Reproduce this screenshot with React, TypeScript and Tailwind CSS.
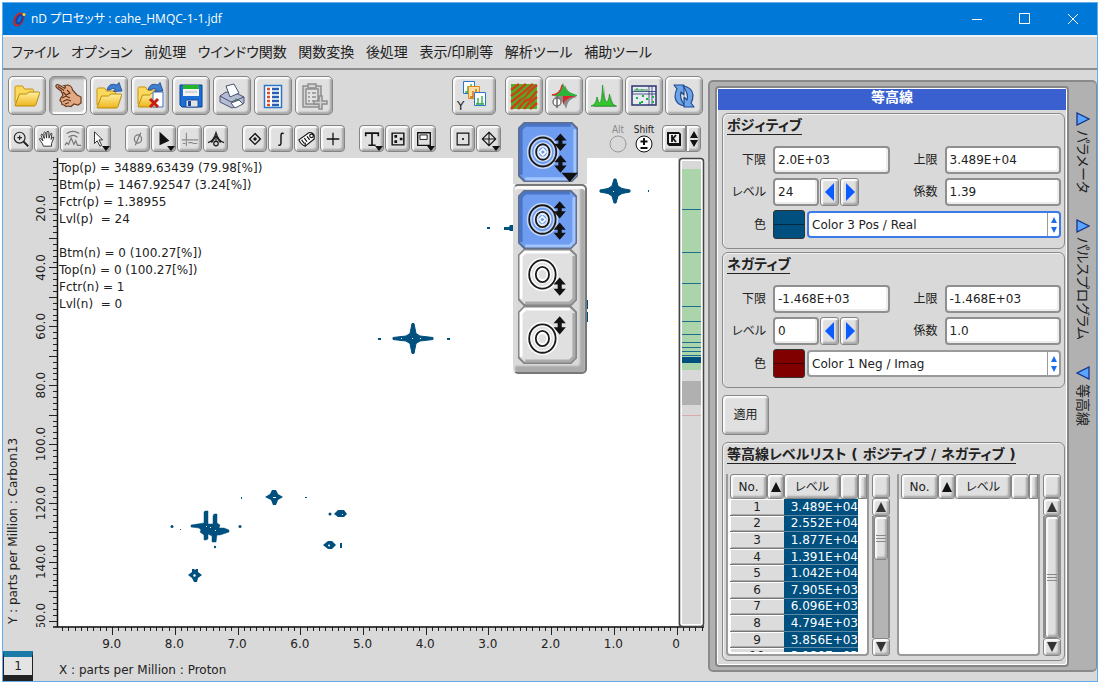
import { useState } from 'react';
import type { ReactNode } from 'react';

type IconProps = { children: ReactNode; size?: string; box?: string };

function Icon({ children, size = 'size-7', box = '0 0 28 28' }: IconProps) {
  return (
    <svg viewBox={box} className={`${size} shrink-0`} fill="none" aria-hidden="true">
      {children}
    </svg>
  );
}

const bevel =
  'border border-[#858585] bg-[#e0e0e0] shadow-[inset_2px_2px_1px_#fafafa,inset_-2px_-2px_2px_#a6a6a6]';

const FolderShape = ({ y = 0 }: { y?: number }) => (
  <g transform={`translate(0 ${y})`} strokeWidth="1" strokeLinejoin="round">
    <path d="M2 20V4.500q0-1.500 1.500-1.500h6l2 3H19q1.500 0 1.500 1.500V10" fill="#fbd95c" stroke="#c79310" />
    <path d="M2 22.500 6.500 11h7l2.500-2h10q1 0 .5 1.500L23 21.500q-.5 1.500-2 1.500H3Z" fill="url(#folder)" stroke="#b98a0c" />
  </g>
);

const CurvedArrow = () => (
  <path d="M12 8Q14 0 22 3l2-2.500L27 9l-8.500.5L20.500 7Q17 5.500 15 8Z" fill="#3f7fd0" stroke="#1b4588" strokeWidth=".8" />
);

const mainTools = [
  { name: 'Open', icon: <FolderShape y={1} /> },
  {
    name: 'Select',
    pressed: true,
    icon: (
      <>
        <path
          d="M2 3.500Q3 2 5 3l6 3.500q1-2-1-3l4-.5q4 1 4.500 5l4.500 5 4 2v6l-3 2-4-1-3 2.500-3-.5-2 .5-2-1.500-2-.5-.5-2.500-1.500-1.500.5-2L9 13 7 9 2.500 5.500Q1.500 4.500 2 3.500Z"
          fill="#e3a982"
          stroke="#6a3a22"
          strokeWidth="1.200"
        />
        <path d="m8 16 4-2 4 2m-7 3.500 4-2 4 1.500m-6 3 4-1.500M13 8l3 3-4 2-3-3M4 4.500l6 4" stroke="#5a2f1b" strokeWidth="1.100" />
      </>
    ),
  },
  { name: 'Open data', icon: <><FolderShape y={3} /><CurvedArrow /></> },
  {
    name: 'Close data',
    icon: (
      <>
        <FolderShape y={2} />
        <path d="M17 10h10v15H17Z" fill="#fff" stroke="#3b74c4" />
        <CurvedArrow />
        <path d="m14 17 8 8m0-8-8 8" stroke="#c81e10" strokeWidth="3" />
      </>
    ),
  },
  {
    name: 'Save',
    icon: (
      <>
        <path d="M3 3h22v22H5l-2-2Z" fill="#1d6fd8" stroke="#0b3f92" />
        <path d="M6 3h16v11H6Z" fill="#f4f4f4" />
        <path d="M6 3h16v4H6Z" fill="#26b52a" />
        <path d="M8 10h12" stroke="#b5b5b5" />
        <path d="M9 18h12v7H9Z" fill="#e3e3e3" stroke="#0b3f92" strokeWidth=".8" />
        <path d="M11 19h3v5h-3Z" fill="#17489c" />
      </>
    ),
  },
  {
    name: 'Print',
    icon: (
      <g stroke="#4a5370" strokeLinejoin="round">
        <path d="m2 14 6-4 12 2 6 3v6l-12 5-12-6Z" fill="#b6bcd4" />
        <path d="m8 4 8-2 5 9-9 4Z" fill="#fafcff" />
        <path d="m2 14 11 6 13-5" />
        <path d="m13 21 8-3 4 4-8 4Z" fill="#fff" />
        <circle cx="18" cy="17.500" r="1" fill="#2c9d35" stroke="none" />
      </g>
    ),
  },
  {
    name: 'List',
    icon: (
      <>
        <path d="M5.500 3.500h17v22h-17Z" fill="#fff" stroke="#2a76c8" strokeWidth="1.500" />
        <path d="M8 7h3m-3 4h3m-3 4h3m-3 4h3m-3 4h3" stroke="#e34b28" strokeWidth="2.400" />
        <path d="M13 7h7m-7 4h7m-7 4h7m-7 4h7m-7 4h7" stroke="#2a5fb0" strokeWidth="2.400" />
      </>
    ),
  },
  {
    name: 'Add',
    icon: (
      <g stroke="#8f8f8f" strokeWidth="1.500" fill="#d3d3d3">
        <path d="M3 4h18v21H3Z" />
        <path d="M6 7h12v15H6Z" fill="#e2e2e2" />
        <path d="M8 2h8v4H8Z" />
        <path d="M8 11h2m2 0h4m-8 4h2m2 0h4m-8 4h2m2 0h2" />
        <path d="M19 14h3v5h5v3h-5v5h-3v-5h-5v-3h5Z" />
      </g>
    ),
  },
];

const viewTools = [
  {
    name: 'Contour map',
    icon: (
      <>
        <path d="M1 2h26v25H1Z" fill="#4fb524" />
        <path
          d="m1 8 8-6M1 14l7-5 8-7M1 20l9-7 5-4 8-7M1 27l9-9 4-2 6-7 7-6M8 27l7-8 5-2 7-8M14 27l5-6 8-6M20 27l7-6"
          stroke="#c9421c"
          strokeWidth="2.600"
        />
        <path d="m4 11 5-5m2 12 6-6m4-2 4-4M7 23l4-3m9 3 5-4" stroke="#8a7a18" strokeWidth="1.400" />
      </>
    ),
  },
  {
    name: 'Phase',
    icon: (
      <>
        <path d="M4 15q10-2 11-12 3 9 12 12-9 1-11 12-3-10-12-12Z" fill="#8a8a8a" />
        <path d="M1 13q10-1 12-12v12Z" fill="#e8262b" />
        <path d="M13 25q0-9 14-11H13Z" fill="#d8262b" />
        <path d="M13 1q2 9 14 12v1H1q9-1 12-13Z" fill="#2fb23a" />
        <path d="M2 13q9-1 10-10" stroke="#e8262b" strokeWidth="1.500" />
        <circle cx="7" cy="20" r="4" fill="#fff" stroke="#777" strokeWidth="1.500" />
        <path d="M7 14v12" stroke="#666" strokeWidth="1.500" />
      </>
    ),
  },
  {
    name: '1D view',
    icon: (
      <>
        <path d="M3 25q4-1 5-9 1 6 3 6 2 1 3-19 1 18 4 18 2 0 3-8 1 10 6 12Z" fill="#9a9a9a" />
        <path d="M1 24q5-1 6-9 1 6 2.500 6Q12 21 12.500 3q1 17 4 17 2 0 3-8 1 11 7 12Z" fill="#35c52c" stroke="#1a9a22" strokeWidth=".8" />
      </>
    ),
  },
  {
    name: 'Data table',
    icon: (
      <g stroke="#2a3570">
        <path d="M2 4h24v19H2Z" fill="#e9ebf4" strokeWidth="1.500" />
        <path d="M2 9.500h24M19 4v19M2 12h24M22 4v19" strokeWidth=".8" />
        <path d="M4 8h3V6v2h5V7v1h6" stroke="#1b9a3a" strokeWidth="1.200" />
        <path d="M6 16h2m4-2h2m-3 6h2m3-3h2m-9 4h2m12-7v2m0 3v2" stroke="#18b53a" strokeWidth="2" />
      </g>
    ),
  },
  {
    name: 'Refresh',
    icon: (
      <g fill="#6ca4e8" stroke="#20498f" strokeWidth="1.200" strokeLinejoin="round">
        <path d="M4 3h10v10l-3-3q-2 6 4 14-9-1-10-9 0-5 2-8Z" />
        <path d="M24 25H14V15l3 3q2-6-4-14 9 1 10 9 0 5-2 8Z" />
      </g>
    ),
  },
];

type SmallTool = { name: string; more?: boolean; icon: ReactNode };

// small tools are drawn on a 20 x 20 grid
const smallTools: SmallTool[][] = [
  [
    {
      name: 'Zoom',
      icon: <g stroke="#222" strokeWidth="1.300"><circle cx="8.500" cy="8.500" r="6" /><path d="M6 8.500h5M8.500 6v5" /><path d="m13 13 5 5" strokeWidth="2.200" /></g>,
    },
    {
      name: 'Pan',
      icon: <path d="M6 18q0-2-4-7-1-2 1-1.500L5.500 12 3.500 6q0-2 1.500-1l2 4.500L6.500 3q1-2 2 0l1 6 .5-7q1.500-1.500 2 0l.2 7L14 4q1.500-1 1.500.5l-1 6 2-2.500q1.500-.5 1 1L15 15v3Z" fill="#fff" stroke="#222" />,
    },
    {
      name: 'Smoothing',
      icon: <path d="m1 17 2-3 2 2 3-7 3 7 2-4 2 5h4M5 8q5-4 10 0M3 4q7-5 14 0" stroke="#777" strokeWidth="1.300" />,
    },
    { name: 'Pick', more: true, icon: <path d="M5 2v13l3-3 3 6 2-1-3-6h4Z" fill="#fff" stroke="#222" /> },
  ],
  [
    { name: 'Phase off', icon: <g stroke="#777" strokeWidth="1.300"><ellipse cx="10" cy="10" rx="4" ry="4.500" /><path d="M13 3 7 17" /></g> },
    { name: 'Pointer', more: true, icon: <path d="M5 2v15l11-5Z" fill="#111" /> },
    { name: 'Baseline', icon: <path d="M6 3v15M1 11h18M2 15h3m3-1h4l2 1h4" stroke="#8a8a8a" strokeWidth="1.200" /> },
    {
      name: 'Peak top',
      icon: <g stroke="#222" strokeWidth="1.400"><path d="M1 14q6-1 9-11 3 10 9 11M5 14l5-7 5 7" /><circle cx="10" cy="15" r="2.500" /><path d="M10 7v5" /></g>,
    },
  ],
  [
    { name: 'Marker', icon: <g stroke="#111" strokeWidth="1.500"><path d="m10 4 6 6-6 6-6-6Z" /><path d="m10 8 2 2-2 2-2-2Z" fill="#111" strokeWidth=".5" /></g> },
    { name: 'Integral', icon: <path d="M13 4q-3-1.500-3 2v8q0 4-3 2.500" stroke="#111" strokeWidth="1.600" /> },
    { name: 'Ruler', icon: <g stroke="#111" strokeWidth="1.300"><path d="m1 11 11-8q4-1 6 3v4L8 18q-5-2-7-7Z" fill="#fff" /><path d="m4 11 3 4m0-6 3 4m0-6 3 4M8 18v-4" /><circle cx="15" cy="6.500" r="2" /></g> },
    { name: 'Crosshair', icon: <path d="M10 3v14M3 10h14" stroke="#111" strokeWidth="1.400" /> },
  ],
  [
    { name: 'Text', more: true, icon: <path d="M3 7V3.500h14V7M10 3.500V16m-4 1h8" stroke="#111" strokeWidth="1.800" /> },
    { name: 'Points', icon: <g><path d="M3.500 3.500h13v13h-13Z" stroke="#111" strokeWidth="1.600" /><path d="M6 5.500h3v3H6Zm6 3h3v3h-3Zm-6 3h3v3H6Z" fill="#111" /></g> },
    { name: 'Inset', more: true, icon: <g stroke="#111" strokeWidth="1.500"><path d="M3 3h14v14H3Z" /><path d="M5.500 5.500h8v5h-8Z" strokeWidth="1" fill="#fff" /></g> },
  ],
  [
    { name: 'Center', icon: <g><path d="M3.500 3.500h13v13h-13Z" stroke="#111" strokeWidth="1.300" /><circle cx="10" cy="10" r="1.200" fill="#111" /></g> },
    { name: 'Move', more: true, icon: <path d="m10 2.500 7.500 7.500-7.500 7.500L2.500 10Zm0 0v15M2.500 10h15" stroke="#111" strokeWidth="1.200" /> },
  ],
];

const doubleArrow = (x: number, y: number, len: number) =>
  `M${x} ${y}l6 7h-4v${len - 14}h4l-6 7-6-7h4v-${len - 14}h-4Z`;

type ContourMode = 'both' | 'bottom' | 'top';

function ContourButton({ mode, height, more, onClick }: { mode: ContourMode; height: number; more?: boolean; onClick: () => void }) {
  const blue = mode === 'both';
  const cy = mode === 'both' ? 29 : mode === 'bottom' ? 25 : 32;
  const h = height;
  return (
    <button type="button" aria-label={`Contour ${mode}`} onClick={onClick} className="block w-full">
      <svg viewBox={`0 0 58 ${h}`} className="w-full" aria-hidden="true">
        <path d={`M6 1h46l5 5v${h - 12}l-5 5H6l-5-5V6Z`} fill={blue ? '#6d9cf0' : '#e0e0e0'} stroke={blue ? '#5d6f92' : '#858585'} strokeWidth="2" />
        <path d={`M3 ${h - 7}V7l4-4h44`} fill="none" stroke={blue ? '#4a74c4' : '#ffffff'} strokeWidth="3" />
        <path d={`M55 7v${h - 14}l-4 4H7`} fill="none" stroke={blue ? '#a2c4ff' : '#ababab'} strokeWidth="3" />
        <g fill="none" stroke="#1a1a1a" strokeWidth="1.800">
          <ellipse cx="24" cy={cy} rx="13" ry="14" stroke="#fff" strokeWidth="5" strokeOpacity={blue ? 0.6 : 0.9} />
          <ellipse cx="24" cy={cy} rx="13" ry="14" />
          <ellipse cx="24" cy={cy} rx="6.500" ry="7" stroke="#fff" strokeWidth="5" strokeOpacity={blue ? 0.8 : 1} />
          <ellipse cx="24" cy={cy} rx="6.500" ry="7.500" />
          {blue && <path d={`M24 ${cy - 3}l3 3-3 3-3-3Z`} stroke="#fff" strokeWidth="1.500" />}
        </g>
        {blue && <path d={`${doubleArrow(41, 11, 17)}${doubleArrow(41, 32, 17)}`} fill="#111" />}
        {mode === 'bottom' && <path d={doubleArrow(41, 28, 18)} fill="#111" />}
        {mode === 'top' && <path d={doubleArrow(41, 10, 18)} fill="#111" />}
        {more && <path d="M42 49h16l-8 9Z" fill="#111" />}
      </svg>
    </button>
  );
}

const menus = ['ファイル', 'オプション', '前処理', 'ウインドウ関数', '関数変換', '後処理', '表示/印刷等', '解析ツール', '補助ツール'];

const xTicks = Array.from({ length: 104 }, (_, i) => i - 4).map((n) => ({ n, x: 676.5 - n * 6.27 }));
const yTicks = Array.from({ length: 80 }, (_, i) => i + 1).map((n) => ({ n, y: 149.6 + n * 5.89 }));
const barLines = [209, 252, 283, 306, 321, 334, 342, 347, 351, 355];

// four-pointed peak centred on cx, cy
const star = (cx: number, cy: number, rx: number, ry: number) =>
  `M${cx - rx} ${cy - 1}L${cx - 7} ${cy - 2.5}L${cx - 3} ${cy - 5}L${cx - 1} ${cy - ry}H${cx + 1}L${cx + 3} ${cy - 5}L${cx + 7} ${cy - 2.5}L${cx + rx} ${cy - 1}V${cy + 1}L${cx + 7} ${cy + 2.5}L${cx + 3} ${cy + 5}L${cx + 1} ${cy + ry}H${cx - 1}L${cx - 3} ${cy + 5}L${cx - 7} ${cy + 2.5}L${cx - rx} ${cy + 1}Z`;

function Spectrum() {
  return (
    <svg viewBox="3 155 705 496" className="block w-full text-[12px]" role="img" aria-label="HMQC spectrum">
      <path d="M58 158h620v468H58Z" fill="#fff" />
      <g stroke="#222">
        {yTicks.filter((t) => t.y > 158).map(({ n, y }) => (
          <path key={n} d={`M57 ${Math.round(y) + 0.5}h${n % 5 === 0 ? -8 : -4}`} />
        ))}
        {xTicks.filter((t) => t.x > 58).map(({ n, x }) => (
          <path key={n} d={`M${Math.round(x) + 0.5} 627v${n % 10 === 0 ? 8 : 4}`} />
        ))}
      </g>
      <path d="M57.500 158v469M53 627h651" stroke="#111" strokeWidth="1.500" />

      <g textAnchor="middle" fill="#222">
        {[9, 8, 7, 6, 5, 4, 3, 2, 1, 0].map((n) => (
          <text key={n} x={676 - n * 62.7} y="648">{n ? n.toFixed(1) : '0'}</text>
        ))}
        {[20, 40, 60, 80, 100, 120, 140].map((n) => (
          <text key={n} transform={`translate(45 ${149.6 + n * 2.945}) rotate(-90)`}>{n.toFixed(1)}</text>
        ))}
        <svg x="30" y="590" width="20" height="37" viewBox="30 590 20 37">
          <text transform="translate(45 620) rotate(-90)">160.0</text>
        </svg>
        <text transform="translate(17 531) rotate(-90)">Y : parts per Million : Carbon13</text>
      </g>

      <g fill="#00507f">
        <path d={`${star(615, 191, 15, 12)}${star(413, 338.5, 20, 15)}`} stroke="#00507f" />
        <path d="M504 227h5l1-2h4v6h-4l-1-1h-5ZM586 300h2v9h-2Zm0 12h2v10h-2Z" />
        <path d="M265 497l5-3 2-4h4l2 4 5 3-5 3-2 5h-3l-2-5Z" />
        <path d="M334 514l4-4h6l3 4-3 3h-6ZM323 545l5-4h4l4 4-4 4h-4ZM188 575l4-3v-3h2l1 1 1-1h2v3l4 3-4 3-1 4h-3l-2-4Z" />
        <path d="M204 512l1-1h3v13h5v-8l1-2h3v9l3 2-1 3h5l5 2v2l-9 3h-3l-1 7h-4v-6l-4-2v5l-2 1h-2v-5l-4-3 1-2-2-2-8-1v-2l13-2Z" stroke="#00507f" strokeWidth=".5" />
        <circle cx="172" cy="526.500" r="1.500" />
        <circle cx="240" cy="526.500" r="1.500" />
        <circle cx="215" cy="547" r="1.200" />
        <circle cx="180.500" cy="529.500" r=".6" />
        <circle cx="330" cy="514" r="1.500" />
        <path d="M340 543h2v5h-2ZM378 338h3v2h-3Zm69 0h3v2h-3ZM487 227h3v2h-3Zm161-37h1v2h-1ZM241 497h1v2h-1Zm64 0h2v1h-2Z" />
      </g>
      <path d="M273 497.500h3M206 526.500h1m3 1h1m4 3h1m126-16h1m69-176h1m-12 0h1m18 0h1m192-147h1" stroke="#fff" strokeWidth="1" />
      <circle cx="194.500" cy="575.500" r="1.200" fill="#fff" />
      <circle cx="329" cy="545.500" r="1" fill="#fff" />

      <rect x="679.500" y="158.500" width="24" height="468" rx="3" fill="#fff" stroke="#444" strokeWidth="1.500" />
      <path d="M682 161h19v463h-19Z" fill="#d8d8d8" />
      <path d="M682 169h19v201h-19Z" fill="#abd4ab" />
      <path d="M682 357h19v6h-19Z" fill="#00507f" />
      <path d="M682 381h19v24h-19Z" fill="#b0b0b0" />
      <path d="M682 415.500h19" stroke="#dba9a9" />
      <g stroke="#1d6c92">
        {barLines.map((y) => <path key={y} d={`M682 ${y + 0.5}h19`} />)}
      </g>
    </svg>
  );
}

const fieldBox =
  'h-7 w-full min-w-0 rounded-[4px] border-2 border-[#8f8f8f] bg-white px-[3px] text-[12px] text-[#222] shadow-[inset_-2px_-2px_0_#ededed] outline-none';

function Field({ id, label, value }: { id: string; label: string; value: string }) {
  return (
    <>
      <label htmlFor={id} className="text-right">{label}</label>
      <input id={id} defaultValue={value} className={fieldBox} />
    </>
  );
}

type ContourProps = {
  id: string;
  title: string;
  low: string;
  high: string;
  factor: string;
  initialLevel: number;
  color: string;
  swatch: string;
  focused?: boolean;
};

function ContourGroup({ id, title, low, high, factor, initialLevel, color, swatch, focused }: ContourProps) {
  const [level, setLevel] = useState(initialLevel);
  return (
    <section className="rounded-[6px] border border-[#8a8a8a] pt-[2px] pr-[3px] pb-[9px] shadow-[inset_1px_1px_0_#f2f2f2]">
      <h2 className="ml-1 w-fit border-b border-[#222] text-[14px] leading-[18px] font-bold">{title}</h2>
      <div className="mt-[11px] grid grid-cols-[43px_1fr_41px_1fr] items-center gap-x-[7px] gap-y-1 text-[12px]">
        <Field id={`${id}-low`} label="下限" value={low} />
        <Field id={`${id}-high`} label="上限" value={high} />
        <label htmlFor={`${id}-level`} className="text-right">レベル</label>
        <div className="flex items-center gap-px">
          <div className="w-[46px]">
            <input id={`${id}-level`} value={level} onChange={(e) => setLevel(Number(e.target.value) || 0)} className={fieldBox} />
          </div>
          <button type="button" aria-label="Decrease level" onClick={() => setLevel(level - 1)} className={`flex h-7 w-[19px] items-center justify-center rounded-[3px] ${bevel}`}>
            <Icon size="h-[18px] w-[10px]" box="0 0 10 18"><path d="M9 0v18L0 9Z" fill="#0a5cff" /></Icon>
          </button>
          <button type="button" aria-label="Increase level" onClick={() => setLevel(level + 1)} className={`flex h-7 w-[19px] items-center justify-center rounded-[3px] ${bevel}`}>
            <Icon size="h-[18px] w-[10px]" box="0 0 10 18"><path d="M1 0v18l9-9Z" fill="#0a5cff" /></Icon>
          </button>
        </div>
        <Field id={`${id}-factor`} label="係数" value={factor} />
        <label htmlFor={`${id}-color`} className="text-right">色</label>
        <div className="col-span-3 flex items-center gap-[2px]">
          <span className={`flex h-[29px] w-8 flex-col justify-center rounded-[3px] border border-[#333] ${swatch}`}>
            <span className="h-px bg-black/50" />
          </span>
          <div className={`relative h-[27px] flex-1 rounded-[4px] border-2 bg-white ${focused ? 'border-[#3c7be6]' : 'border-[#9a9a9a]'}`}>
            <select id={`${id}-color`} defaultValue={color} className="h-full w-full appearance-none px-[3px] text-[12px] text-[#222] outline-none">
              <option>Color 1 Neg / Imag</option>
              <option>Color 3 Pos / Real</option>
            </select>
            <span className="pointer-events-none absolute inset-y-0 right-0 flex w-3 items-center justify-center border-l border-[#9a9a9a]">
              <Icon size="h-4 w-2" box="0 0 8 16"><path d="m4 0 3 6H1Zm0 16 3-6H1Z" fill="#1c6cf0" /></Icon>
            </span>
          </div>
        </div>
      </div>
    </section>
  );
}

const levels = ['3.489E+04', '2.552E+04', '1.877E+04', '1.391E+04', '1.042E+04', '7.905E+03', '6.096E+03', '4.794E+03', '3.856E+03', '3.180E+03'];

function LevelTable({ rows, thumb }: { rows: string[]; thumb: string }) {
  return (
    <div className="flex min-w-0 flex-1 gap-[3px]">
      <div className="h-[182px] min-w-0 flex-1 rounded-b-[4px] border-2 border-t-0 border-[#9a9a9a] bg-white">
        <div className="flex bg-[#d8d8d8] pl-[2px] text-[12px]">
          <div className={`flex h-[25px] w-[37px] items-center justify-center rounded-[3px] ${bevel}`}>No.</div>
          <button type="button" aria-label="Sort" className={`flex h-[25px] w-[17px] items-center justify-center rounded-[3px] ${bevel}`}>
            <Icon size="size-[10px]" box="0 0 10 10"><path d="m5 0 5 10H0Z" fill="#111" /></Icon>
          </button>
          <div className={`flex h-[25px] w-14 items-center justify-center rounded-[3px] ${bevel}`}>レベル</div>
          <div className={`h-[25px] w-[18px] rounded-[3px] ${bevel}`} />
          <div className={`h-[25px] flex-1 ${bevel}`} />
        </div>
        {rows.length > 0 && (
          <div className="h-[153px] overflow-hidden pl-[2px]">
            <table className="h-[166px] w-[128px] table-fixed border-collapse text-[12px] leading-[14px]">
              <tbody>
                {rows.map((value, i) => (
                  <tr key={value}>
                    <th scope="row" className="w-[54px] border-b border-[#777] bg-[#dcdcdc] p-0 font-normal shadow-[inset_1px_1px_0_#fff,inset_0_-1px_0_#aaa]">{i + 1}</th>
                    <td className="border-b border-[#5d88a3] bg-[#00507f] p-0 text-right text-white">{value}</td>
                  </tr>
                ))}
              </tbody>
            </table>
          </div>
        )}
      </div>
      <div className="flex w-[18px] flex-col">
        <div className={`h-6 rounded-[3px] ${bevel}`} />
        <button type="button" aria-label="Scroll up" className={`flex h-[18px] items-center justify-center rounded-[3px] ${bevel}`}>
          <Icon size="size-[10px]" box="0 0 10 10"><path d="m5 0 5 10H0Z" fill="#333" /></Icon>
        </button>
        <div className="flex-1 border-x-2 border-[#8f8f8f] bg-[#b4b4b4]">
          <div className={`flex flex-col items-center justify-center gap-[2px] rounded-[3px] ${bevel} ${thumb}`}>
            <span className="h-px w-[10px] bg-[#888]" />
            <span className="h-px w-[10px] bg-[#888]" />
            <span className="h-px w-[10px] bg-[#888]" />
          </div>
        </div>
        <button type="button" aria-label="Scroll down" className={`flex h-[18px] items-center justify-center rounded-[3px] ${bevel}`}>
          <Icon size="size-[10px]" box="0 0 10 10"><path d="m5 10 5-10H0Z" fill="#333" /></Icon>
        </button>
      </div>
    </div>
  );
}

function SideTab({ label, open }: { label: string; open?: boolean }) {
  return (
    <button type="button" className="flex flex-col items-center gap-1 text-[14px] leading-5">
      <Icon size="size-[14px]" box="0 0 14 14">
        <path d={open ? 'M13 1v12L1 7Z' : 'M1 1v12l12-6Z'} fill="#5aa5ff" stroke="#16338a" strokeWidth="1.300" />
      </Icon>
      <span className="[text-orientation:sideways] [writing-mode:vertical-rl]">{label}</span>
    </button>
  );
}

export default function App() {
  const [mode, setMode] = useState<ContourMode>('both');

  return (
    <div className="bg-white p-[2px] font-['DejaVu_Sans','Noto_Sans_CJK_JP',sans-serif] text-[#222] [font-feature-settings:'palt']">
      <svg className="absolute size-0" aria-hidden="true">
        <linearGradient id="folder" x1="0" y1="0" x2="0" y2="1">
          <stop offset="0" stopColor="#fff0a0" />
          <stop offset="1" stopColor="#eeb51c" />
        </linearGradient>
      </svg>

      <div className="border border-[#64acec] bg-[#d9d9d9]">
        <header className="flex h-8 items-center bg-[#0078d7] pl-2 text-white">
          <Icon size="size-4" box="0 0 16 16">
            <ellipse cx="8" cy="8.500" rx="4" ry="6.500" transform="rotate(28 8 8)" stroke="#c8281e" strokeWidth="2" />
            <ellipse cx="8.500" cy="8" rx="2.500" ry="4.500" transform="rotate(28 8 8)" stroke="#1b3fa8" strokeWidth="2" />
            <circle cx="13" cy="3.500" r="1.500" fill="#ffd33a" />
          </Icon>
          <h1 className="ml-1 flex-1 font-['Open_Sans','Noto_Sans_CJK_JP',sans-serif] text-[12px]">nD プロセッサ : cahe_HMQC-1-1.jdf</h1>
          <button type="button" aria-label="Minimize" className="flex h-8 w-12 items-center justify-center">
            <Icon size="size-3" box="0 0 12 12"><path d="M1 6.500h10" stroke="#fff" /></Icon>
          </button>
          <button type="button" aria-label="Maximize" className="flex h-8 w-12 items-center justify-center">
            <Icon size="size-3" box="0 0 12 12"><path d="M.5 .5h10v10H.5Z" stroke="#fff" /></Icon>
          </button>
          <button type="button" aria-label="Close" className="flex h-8 w-12 items-center justify-center">
            <Icon size="size-3" box="0 0 12 12"><path d="m1 1 10 10m0-10L1 11" stroke="#fff" /></Icon>
          </button>
        </header>

        <nav className="h-[35px] border-t-2 border-b-2 border-t-[#f2f2f2] border-b-[#8c8c8c] pl-2 font-['Liberation_Sans','Noto_Sans_CJK_JP',sans-serif]">
          <div className="flex h-full w-[641px] items-center justify-between text-[14px]">
            {menus.map((menu) => (
              <button key={menu} type="button">{menu}</button>
            ))}
          </div>
        </nav>

        <main className="flex items-start">
          <div className="relative min-w-0 flex-1">
            <div className="flex justify-between pt-[6px] pr-[5px] pl-[5px]">
              <div className="flex gap-[3px]">
                {mainTools.map((tool) => (
                  <button
                    key={tool.name}
                    type="button"
                    aria-label={tool.name}
                    className={`flex h-[39px] w-[38px] items-center justify-center rounded-[5px] ${tool.pressed ? 'border border-[#8a8a8a] bg-[#d6d6d6] shadow-[inset_2px_2px_2px_#a0a0a0,inset_-2px_-2px_1px_#fff]' : bevel}`}
                  >
                    <Icon>{tool.icon}</Icon>
                  </button>
                ))}
              </div>
              <div className="flex gap-[2px]">
                <button type="button" aria-label="Y axis data" className={`mr-[7px] flex h-[39px] w-11 items-center justify-center rounded-[5px] ${bevel}`}>
                  <Icon size="h-8 w-9" box="0 0 36 32">
                    <path d="M7.500 1.500h11v12h-11Z" fill="#fff" stroke="#2a76c8" />
                    <path d="M9 12h3V6m3 6V4m0 8h2" stroke="#2aa53a" strokeWidth="1.300" />
                    <path d="M12.500 6.500h11v12h-11Z" fill="#ffdca0" stroke="#d98a1c" />
                    <path d="M14 17h3v-6m3 6V9m0 8h2" stroke="#c06c10" strokeWidth="1.300" />
                    <path d="M18.500 12.500h11v13h-11Z" fill="#fff" stroke="#2a76c8" />
                    <path d="M20 24h2v-6m0 6h4v-8m0 8h2" stroke="#2aa53a" strokeWidth="1.300" />
                    <text x="1" y="30" fill="#222" fontSize="12">Y</text>
                  </Icon>
                </button>
                {viewTools.map((tool) => (
                  <button key={tool.name} type="button" aria-label={tool.name} className={`flex h-[39px] w-[38px] items-center justify-center rounded-[5px] ${bevel}`}>
                    <Icon>{tool.icon}</Icon>
                  </button>
                ))}
              </div>
            </div>

            <div className="flex h-10 items-start justify-between pt-[10px] pr-[7px] pl-[5px]">
              <div className="flex gap-[14px]">
                {smallTools.map((group) => (
                  <div key={group[0].name} className="flex gap-px">
                    {group.map((tool) => (
                      <button key={tool.name} type="button" aria-label={tool.name} className={`relative flex h-[27px] w-[25px] items-center justify-center rounded-[4px] ${bevel}`}>
                        <Icon size="size-[18px]" box="0 0 20 20">{tool.icon}</Icon>
                        {tool.more && (
                          <svg viewBox="0 0 8 5" className="absolute right-0 bottom-0 h-[5px] w-2" aria-hidden="true">
                            <path d="M0 0h8L4 5Z" fill="#111" />
                          </svg>
                        )}
                      </button>
                    ))}
                  </div>
                ))}
              </div>
              <div className="flex font-['DejaVu_Sans_Condensed',sans-serif] text-[10px] leading-[10px]">
                <button type="button" className="flex w-6 flex-col items-center text-[#8a8a8a]">
                  Alt
                  <Icon size="size-[18px]" box="0 0 18 18"><circle cx="9" cy="9" r="8" stroke="#999" /></Icon>
                </button>
                <button type="button" className="flex w-7 flex-col items-center">
                  Shift
                  <Icon size="size-[18px]" box="0 0 18 18">
                    <circle cx="9" cy="9" r="8" fill="#fff" stroke="#111" />
                    <path d="M9 3v7M5.500 6.500h7m-7 6.500h7" stroke="#111" strokeWidth="2" />
                  </Icon>
                </button>
                <button type="button" aria-label="Keyboard" className={`ml-1 flex h-[27px] w-6 items-center justify-center rounded-l-[4px] ${bevel}`}>
                  <Icon size="size-4" box="0 0 16 16">
                    <path d="M1 1h12l2 2v12H3l-2-2Z" fill="#111" />
                    <path d="M3 3h10v9H3Z" fill="#eee" />
                    <path d="M6 4v7m4-7L7 7.500l3 3.500" stroke="#111" strokeWidth="1.800" />
                  </Icon>
                </button>
                <button type="button" aria-label="Step" className={`flex h-[27px] w-[15px] items-center justify-center rounded-r-[4px] ${bevel}`}>
                  <Icon size="h-4 w-2" box="0 0 8 16"><path d="m4 0 4 7H0Zm0 16 4-7H0Z" fill="#111" /></Icon>
                </button>
              </div>
            </div>

            <div className="relative">
              <Spectrum />
              <pre className="absolute top-[5px] left-14 font-[inherit] text-[12px] leading-[17px]">
                {`Top(p) = 34889.63439 (79.98[%])
Btm(p) = 1467.92547 (3.24[%])
Fctr(p) = 1.38955
Lvl(p)  = 24

Btm(n) = 0 (100.27[%])
Top(n) = 0 (100.27[%])
Fctr(n) = 1
Lvl(n)  = 0`}
              </pre>
            </div>

            <div className="flex items-center gap-[26px] text-[12px]">
              <button type="button" className="h-[30px] w-[30px] border border-t-[6px] border-b-[6px] border-[#222] border-t-[#1c7aa8] bg-[#e4e4e4] leading-[17px]">1</button>
              <span className="pt-2">X : parts per Million : Proton</span>
            </div>

            <div className="absolute top-[52px] left-[510px] w-[74px]">
              <div className="bg-[#d9d9d9] pr-[9px] pb-[2px] pl-[5px]">
                <ContourButton mode="both" height={58} more onClick={() => setMode('both')} />
              </div>
              <div role="menu" data-mode={mode} className="rounded-[5px] border-2 border-t-[#777] border-r-[#777] border-b-[#777] border-l-[#d9d9d9] bg-[#d9d9d9] pt-[4px] pr-[8px] pb-[8px] pl-[3px] shadow-[inset_0_3px_1px_#fafafa,inset_-5px_-6px_2px_#ababab]">
                <ContourButton mode="both" height={58} onClick={() => setMode('both')} />
                <ContourButton mode="bottom" height={56} onClick={() => setMode('bottom')} />
                <ContourButton mode="top" height={57} onClick={() => setMode('top')} />
              </div>
            </div>
          </div>

          <aside className="mt-[10px] flex w-[389px] shrink-0 self-stretch pb-[9px]">
            <div className="flex flex-1 rounded-[5px] border-2 border-r border-[#8a8a8a] bg-[#b1b1b1] pt-1 pb-[3px] pl-[5px]">
              <div className="flex-1 rounded-[4px] border-2 border-[#858585] bg-[#d9d9d9] shadow-[inset_1px_1px_0_#fff,inset_-1px_-1px_0_#fff]">
                <h2 className="m-px h-[21px] bg-[#3a5fcf] text-center text-[14px] leading-[16px] font-bold text-white">等高線</h2>
                <div className="flex flex-col gap-[3px] pt-[2px] pr-[2px] pl-[5px]">
                  <ContourGroup id="positive" title="ポジィティブ" low="2.0E+03" high="3.489E+04" factor="1.39" initialLevel={24} color="Color 3 Pos / Real" swatch="bg-[#00507f]" focused />
                  <ContourGroup id="negative" title="ネガティブ" low="-1.468E+03" high="-1.468E+03" factor="1.0" initialLevel={0} color="Color 1 Neg / Imag" swatch="bg-[#800000]" />
                  <button type="button" className={`my-1 h-10 w-[47px] rounded-[4px] text-[12px] ${bevel}`}>適用</button>
                  <section className="rounded-[6px] border border-[#8a8a8a] px-[3px] pt-[2px] pb-1 shadow-[inset_1px_1px_0_#f2f2f2]">
                    <h2 className="ml-px w-fit border-b border-[#222] text-[14px] leading-[18px] font-bold whitespace-pre">等高線レベルリスト ( ポジティブ / ネガティブ )</h2>
                    <div className="mt-[10px] flex gap-[7px]">
                      <LevelTable rows={levels} thumb="h-11" />
                      <LevelTable rows={[]} thumb="h-full" />
                    </div>
                  </section>
                </div>
              </div>
              <div className="flex w-[27px] flex-col items-center gap-[26px] pt-[26px]">
                <SideTab label="パラメータ" />
                <SideTab label="パルスプログラム" />
                <SideTab label="等高線" open />
              </div>
            </div>
          </aside>
        </main>
      </div>
    </div>
  );
}
